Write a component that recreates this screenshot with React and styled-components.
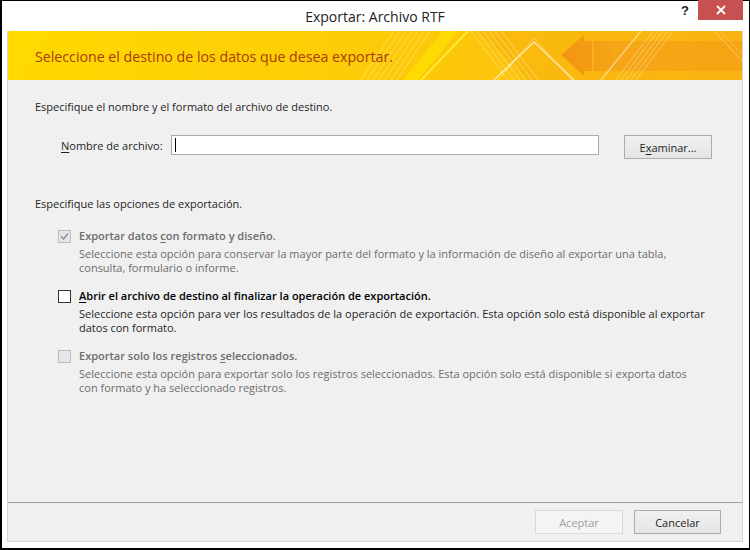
import styled, { createGlobalStyle } from 'styled-components';

const GlobalStyle = createGlobalStyle`
	html, body {
		margin: 0;
		padding: 0;
		background: #000;
	}
	* {
		box-sizing: border-box;
	}
`;

const UI_FONT = `'Open Sans', 'Noto Sans', sans-serif`;

const Window = styled.div`
	width: 750px;
	height: 550px;
	background: #fff;
	border: 1px solid #000;
	border-left-width: 2px;
	border-bottom-width: 2px;
	padding: 0 6px 6px 5px;
	display: flex;
	flex-direction: column;
	font-family: ${UI_FONT};
`;

const TitleBar = styled.div`
	height: 30px;
	display: grid;
	grid-template-columns: 1fr auto 1fr;
	align-items: start;
`;

const Title = styled.div`
	font-size: 14px;
	color: #222;
	line-height: 31px;
	text-align: center;
`;

const Controls = styled.div`
	display: flex;
	justify-content: flex-end;
	align-items: flex-start;
	margin-top: -1px;
`;

const HelpButton = styled.div`
	width: 26px;
	height: 20px;
	font: bold 13px 'Liberation Sans', sans-serif;
	color: #222;
	display: flex;
	align-items: center;
	justify-content: center;
`;

const CloseButton = styled.div`
	width: 45px;
	height: 20px;
	background: #c75050;
	display: flex;
	align-items: center;
	justify-content: center;
`;

const Frame = styled.div`
	flex: 1;
	display: flex;
	flex-direction: column;
	background: #f0f0f0;
	border: 1px solid #d6d6d6;
	border-top: none;
`;

const Banner = styled.div`
	position: relative;
	height: 49px;
	display: flex;
	align-items: center;
	padding-left: 27px;
	overflow: hidden;
	svg.bg {
		position: absolute;
		inset: 0;
	}
`;

const BannerText = styled.span`
	position: relative;
	font-size: 14.2px;
	color: #a83c08;
	margin-top: 1px;
`;

const Content = styled.div`
	flex: 1;
	padding: 19px 0 0 27px;
	font-size: 11px;
	color: #1e1e1e;
`;

const SectionLabel = styled.div`
	line-height: 16px;
`;

const FileRow = styled.div`
	display: flex;
	align-items: center;
	margin: 20px 0 0 26px;
	height: 24px;
`;

const FieldLabel = styled.label`
	width: 110px;
	margin-top: -4px;
`;

const TextInput = styled.div`
	width: 428px;
	height: 20px;
	background: #fff;
	border: 1px solid #ababab;
	padding: 2px 0 0 3px;
	margin-top: -4px;
	&::before {
		content: '';
		display: block;
		width: 1px;
		height: 14px;
		background: #000;
	}
`;

const Button = styled.div`
	width: ${(p) => p.$width || 88}px;
	height: 24px;
	display: flex;
	align-items: center;
	justify-content: center;
	border: 1px solid ${(p) => (p.$disabled ? '#d9d9d9' : '#acacac')};
	background: ${(p) =>
		p.$disabled ? '#f4f4f4' : 'linear-gradient(#f0f0f0, #e5e5e5)'};
	color: ${(p) => (p.$disabled ? '#a0a0a0' : '#1e1e1e')};
	font-size: 11px;
`;

const BrowseButton = styled(Button)`
	margin-left: 25px;
`;

const OptionsLabel = styled(SectionLabel)`
	margin-top: 37px;
`;

const OptionList = styled.div`
	display: flex;
	flex-direction: column;
	gap: 13px;
	margin: 16px 0 0 23px;
`;

const Option = styled.div`
	display: grid;
	grid-template-columns: 21px 1fr;
	color: ${(p) => (p.$disabled ? '#6d6d6d' : '#1e1e1e')};
`;

const Box = styled.div`
	width: 13px;
	height: 13px;
	margin-top: 2px;
	border: 1px solid ${(p) => (p.$disabled ? '#bcbcbc' : '#333')};
	background: ${(p) => (p.$disabled ? '#e6e6e6' : '#fff')};
	display: flex;
	align-items: center;
	justify-content: center;
`;

const OptionTitle = styled.div`
	font-weight: 600;
	line-height: 16px;
	color: ${(p) => (p.$disabled ? '#6d6d6d' : '#000')};
`;

const OptionDesc = styled.div`
	grid-column: 2;
	margin-top: 3px;
	line-height: 14px;
	white-space: nowrap;
	color: ${(p) => (p.$disabled ? '#6d6d6d' : '#1e1e1e')};
`;

const Footer = styled.div`
	height: 39px;
	border-top: 1px solid #a0a0a0;
	display: flex;
	justify-content: flex-end;
	align-items: center;
	gap: 11px;
	padding: 0 21px 0 0;
`;

const Key = styled.u`
	text-decoration: underline;
	text-underline-offset: 2px;
`;

const BannerArt = () => (
	<svg className='bg' width='736' height='49' viewBox='0 0 736 49'>
		<defs>
			<linearGradient id='bn' x1='0' x2='1' y1='0' y2='0'>
				<stop offset='0' stopColor='#ffd900' />
				<stop offset='0.55' stopColor='#fdc909' />
				<stop offset='1' stopColor='#fbb815' />
			</linearGradient>
			<linearGradient id='arrow' x1='0' x2='1' y1='0' y2='0'>
				<stop offset='0' stopColor='#f29312' />
				<stop offset='0.3' stopColor='#f6a616' />
				<stop offset='1' stopColor='#f7a414' />
			</linearGradient>
		</defs>
		<rect width='736' height='49' fill='url(#bn)' />
		<path d='M0 49 L40 0 L0 0 Z' fill='#ffe000' opacity='0.25' />
		<path d='M470 0 L736 0 L736 49 L520 49 Z' fill='#f8ad10' opacity='0.4' />
		<path d='M395 49 L435 0 L450 0 L410 49 Z' fill='#ffe600' opacity='0.6' />
		<path d='M553 24 L576 4 L576 10 L736 10 L736 40 L576 40 L576 45 Z' fill='url(#arrow)' />
		<path d='M585 10 L585 40' stroke='#fbc534' strokeWidth='1' />
		<g stroke='#fff' strokeOpacity='0.35' strokeWidth='1'>
			<path d='M353 49 L386 0 M359 49 L392 0 M365 49 L398 0 M371 49 L404 0 M377 49 L410 0 M383 49 L416 0 M389 49 L422 0' />
			<path d='M463 0 L500 49 M469 0 L506 49 M475 0 L512 49 M481 0 L518 49 M487 0 L524 49 M493 0 L530 49' />
			<path d='M608 49 L645 0 M613 49 L650 0 M618 49 L655 0 M623 49 L660 0 M628 49 L665 0' />
			<path d='M490 49 L526 7 L564 49' fill='none' />
		</g>
		<path d='M413 49 L460 0' stroke='#ffea30' strokeWidth='2' />
		<path d='M486 49 L526 11 L566 49' stroke='#fff' strokeOpacity='0.6' strokeWidth='1.6' fill='none' />
		<path d='M593 49 L633 0' stroke='#fff' strokeOpacity='0.45' strokeWidth='1.5' />
		<path d='M706 0 L736 32' stroke='#fff' strokeOpacity='0.35' strokeWidth='1' fill='none' />
		<path d='M712 0 L736 26' stroke='#fff' strokeOpacity='0.25' strokeWidth='1' fill='none' />
	</svg>
);

const Check = ({ checked, disabled }) => (
	<Box $disabled={disabled}>
		{checked && (
			<svg width='9' height='9' viewBox='0 0 9 9'>
				<path d='M1 4.5 L3.5 7 L8 1.5' stroke='#8a8a8a' strokeWidth='1.4' fill='none' />
			</svg>
		)}
	</Box>
);

const options = [
	{
		title: (
			<>
				Exportar datos <Key>c</Key>on formato y diseño.
			</>
		),
		desc: [
			'Seleccione esta opción para conservar la mayor parte del formato y la información de diseño al exportar una tabla,',
			'consulta, formulario o informe.',
		],
		checked: true,
		disabled: true,
	},
	{
		title: (
			<>
				<Key>A</Key>brir el archivo de destino al finalizar la operación de exportación.
			</>
		),
		desc: [
			'Seleccione esta opción para ver los resultados de la operación de exportación. Esta opción solo está disponible al exportar',
			'datos con formato.',
		],
		checked: false,
		disabled: false,
	},
	{
		title: (
			<>
				Exportar solo los registros <Key>s</Key>eleccionados.
			</>
		),
		desc: [
			'Seleccione esta opción para exportar solo los registros seleccionados. Esta opción solo está disponible si exporta datos',
			'con formato y ha seleccionado registros.',
		],
		checked: false,
		disabled: true,
	},
];

const App = () => (
	<>
		<GlobalStyle />
		<Window>
			<TitleBar>
				<div />
				<Title>Exportar: Archivo RTF</Title>
				<Controls>
					<HelpButton>?</HelpButton>
					<CloseButton>
						<svg width='10' height='10' viewBox='0 0 10 10'>
							<path d='M1 1 L9 9 M9 1 L1 9' stroke='#fff' strokeWidth='1.8' />
						</svg>
					</CloseButton>
				</Controls>
			</TitleBar>
			<Frame>
				<Banner>
					<BannerArt />
					<BannerText>Seleccione el destino de los datos que desea exportar.</BannerText>
				</Banner>
				<Content>
					<SectionLabel>Especifique el nombre y el formato del archivo de destino.</SectionLabel>
					<FileRow>
						<FieldLabel>
							<Key>N</Key>ombre de archivo:
						</FieldLabel>
						<TextInput />
						<BrowseButton>
							E<Key>x</Key>aminar...
						</BrowseButton>
					</FileRow>
					<OptionsLabel>Especifique las opciones de exportación.</OptionsLabel>
					<OptionList>
						{options.map((o, i) => (
							<Option key={i} $disabled={o.disabled}>
								<Check checked={o.checked} disabled={o.disabled} />
								<OptionTitle $disabled={o.disabled}>{o.title}</OptionTitle>
								<OptionDesc $disabled={o.disabled}>
									{o.desc[0]}
									<br />
									{o.desc[1]}
								</OptionDesc>
							</Option>
						))}
					</OptionList>
				</Content>
				<Footer>
					<Button $disabled>Aceptar</Button>
					<Button $width={87}>Cancelar</Button>
				</Footer>
			</Frame>
		</Window>
	</>
);

export default App;
